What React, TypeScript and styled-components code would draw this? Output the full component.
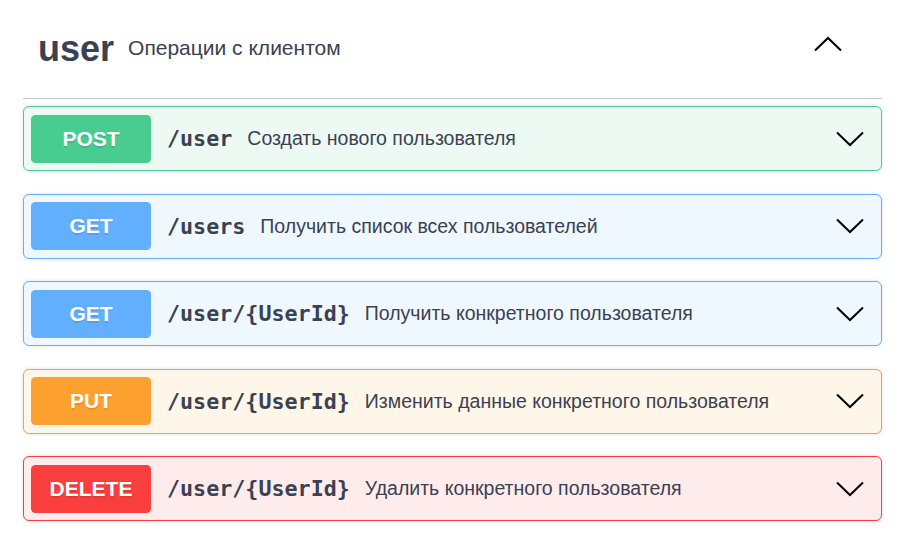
import React from "react";
import styled, { createGlobalStyle } from "styled-components";

const Global = createGlobalStyle`
  html, body { margin: 0; padding: 0; background: #ffffff; }
  body { font-family: "Liberation Sans", Arial, sans-serif; color: #3b4151; }
`;

type Method = "POST" | "GET" | "PUT" | "DELETE";

const palette: Record<Method, { main: string; bg: string }> = {
  POST: { main: "#49cc90", bg: "#edfaf4" },
  GET: { main: "#61affe", bg: "#eff7ff" },
  PUT: { main: "#fca130", bg: "#fff6ea" },
  DELETE: { main: "#f93e3e", bg: "#feecec" },
};

const Page = styled.div`
  padding: 0 22px 0 23px;
`;

const TagHeader = styled.div`
  display: flex;
  align-items: center;
  box-sizing: border-box;
  height: 99px;
  padding: 0 40px 0 15px;
  border-bottom: 1px solid #c4c6cb;
  margin-bottom: 7px;
`;

const TagName = styled.span`
  font-size: 36px;
  font-weight: bold;
  color: #3b4151;
`;

const TagDesc = styled.small`
  flex: 1;
  font-size: 21px;
  padding: 0 15px 2px 14px;
  color: #3b4151;
`;

const Block = styled.div<{ $m: Method }>`
  display: flex;
  align-items: center;
  box-sizing: border-box;
  height: 65px;
  padding: 0 17px 0 7px;
  margin-bottom: 22.5px;
  border: 1px solid ${(p) => palette[p.$m].main};
  background: ${(p) => palette[p.$m].bg};
  border-radius: 6px;
  box-shadow: 0 0 4px rgba(0, 0, 0, 0.12);
`;

const Badge = styled.span<{ $m: Method }>`
  display: flex;
  align-items: center;
  justify-content: center;
  width: 120px;
  height: 48px;
  border-radius: 4.5px;
  background: ${(p) => palette[p.$m].main};
  color: #fff;
  font-size: 21px;
  font-weight: bold;
  text-shadow: 0 1.5px 0 rgba(0, 0, 0, 0.1);
  flex-shrink: 0;
`;

const Path = styled.span`
  font-family: "DejaVu Sans Mono", "Liberation Mono", monospace;
  font-weight: bold;
  font-size: 21.7px;
  color: #3b4151;
  padding: 0 15px 0 16px;
`;

const Desc = styled.span`
  flex: 1;
  font-size: 19.5px;
  color: #3b4151;
`;

const Chevron = styled.svg<{ $lift?: number }>`
  flex-shrink: 0;
  display: block;
  margin-bottom: ${(p) => (p.$lift ?? 0) * 2}px;
`;

const Down = () => (
  <Chevron width="28" height="16" viewBox="0 0 28 16">
    <polyline points="1,1.5 14,14 27,1.5" fill="none" stroke="#000" strokeWidth="2" />
  </Chevron>
);

const Up = () => (
  <Chevron width="28" height="16" viewBox="0 0 28 16" $lift={5}>
    <polyline points="1,14.5 14,2 27,14.5" fill="none" stroke="#000" strokeWidth="2" />
  </Chevron>
);

const ops: { m: Method; path: string; desc: string }[] = [
  { m: "POST", path: "/user", desc: "Создать нового пользователя" },
  { m: "GET", path: "/users", desc: "Получить список всех пользователей" },
  { m: "GET", path: "/user/{UserId}", desc: "Получить конкретного пользователя" },
  { m: "PUT", path: "/user/{UserId}", desc: "Изменить данные конкретного пользователя" },
  { m: "DELETE", path: "/user/{UserId}", desc: "Удалить конкретного пользователя" },
];

export default function App() {
  return (
    <>
      <Global />
      <Page>
        <TagHeader>
          <TagName>user</TagName>
          <TagDesc>Операции с клиентом</TagDesc>
          <Up />
        </TagHeader>
        {ops.map((o, i) => (
          <Block key={i} $m={o.m}>
            <Badge $m={o.m}>{o.m}</Badge>
            <Path>{o.path}</Path>
            <Desc>{o.desc}</Desc>
            <Down />
          </Block>
        ))}
      </Page>
    </>
  );
}
